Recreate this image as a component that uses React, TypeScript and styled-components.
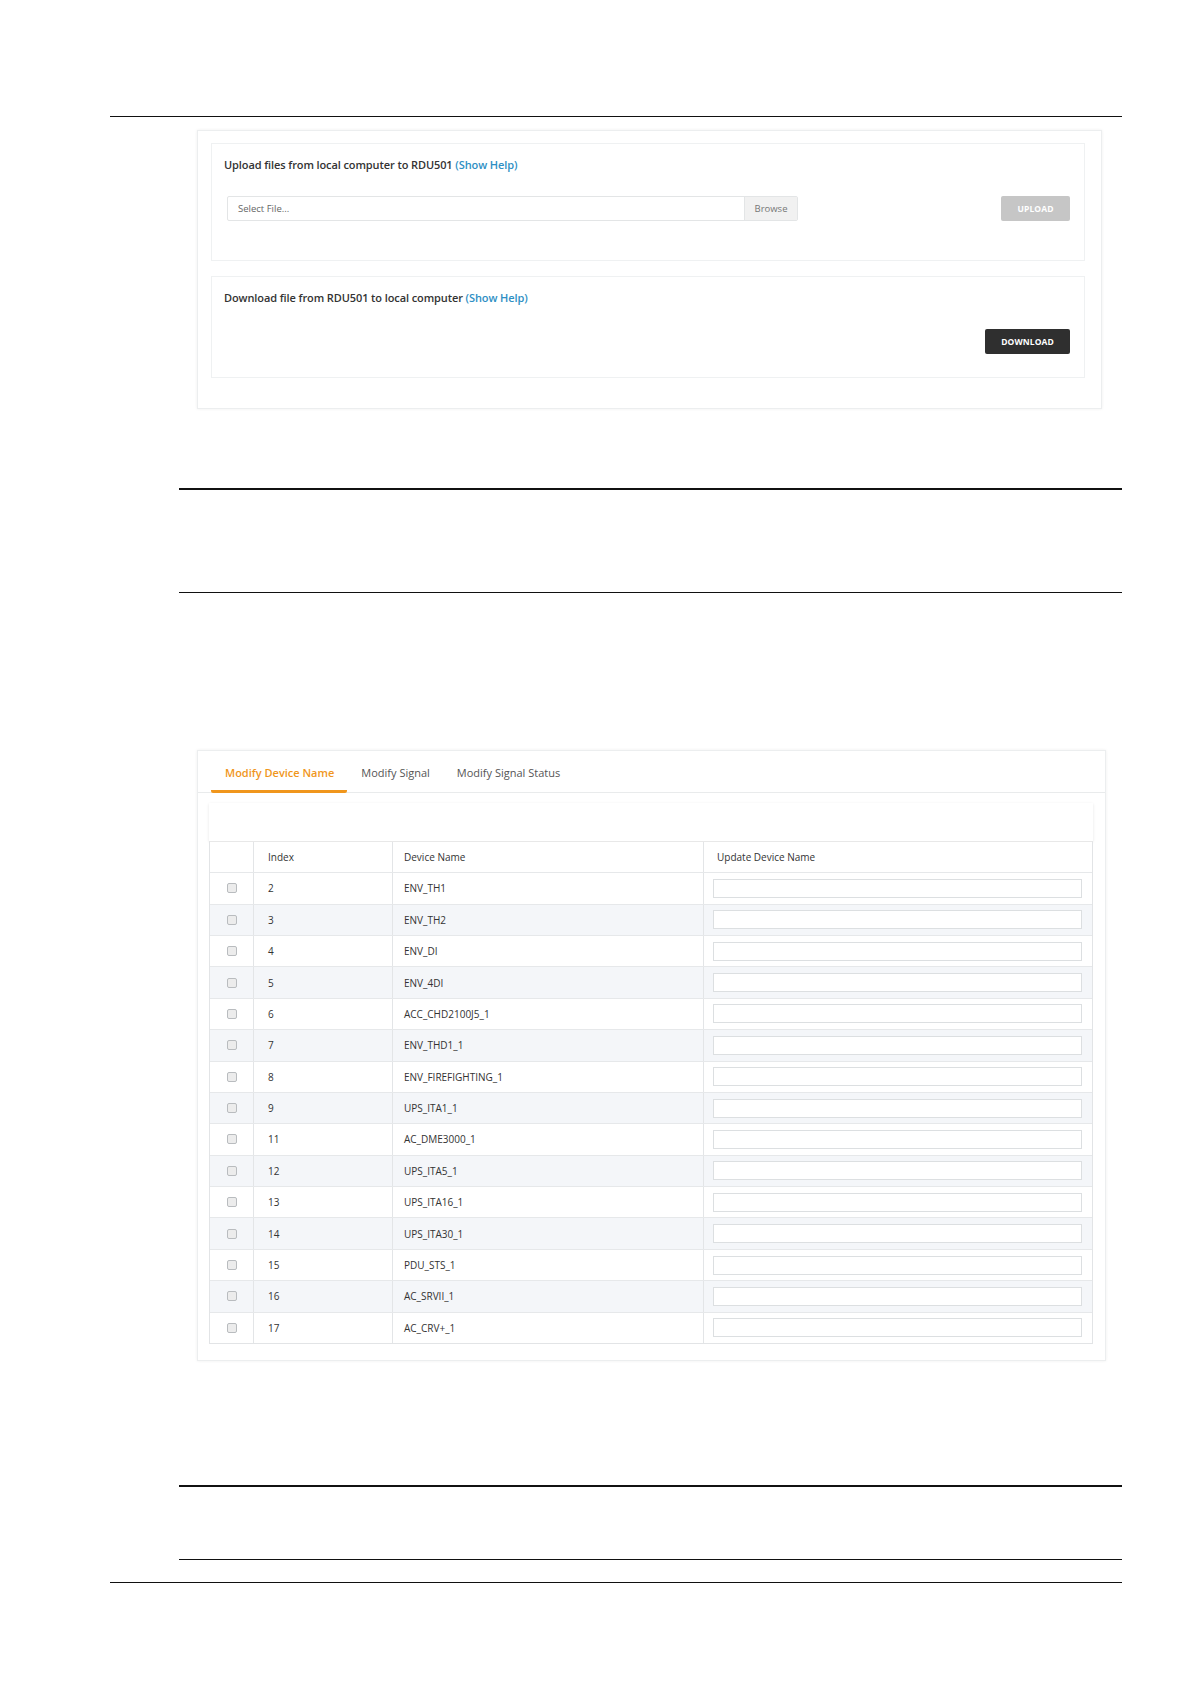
import styled, { createGlobalStyle } from 'styled-components';

const GlobalStyle = createGlobalStyle`
  body {
    margin: 0;
    background: #ffffff;
    font-family: 'Open Sans', 'Liberation Sans', sans-serif;
    color: #333333;
  }
`;

const Page = styled.div`
  width: 1190px;
  height: 1684px;
  display: flex;
  flex-direction: column;
  background: #ffffff;
`;

const Rule = styled.div<{ $top: number; $left: number }>`
  margin: ${(p) => p.$top}px 68px 0 ${(p) => p.$left}px;
  height: 1.4px;
  background: #111111;
  flex: none;
`;

const OuterCard = styled.div<{ $top: number; $width: number; $height: number }>`
  box-sizing: border-box;
  margin: ${(p) => p.$top}px 0 0 197px;
  width: ${(p) => p.$width}px;
  height: ${(p) => p.$height}px;
  background: #ffffff;
  border: 1px solid #eceeef;
  box-shadow: 0 0 3px rgba(0, 0, 0, 0.07);
  flex: none;
`;

const FileBody = styled.div`
  display: flex;
  flex-direction: column;
  gap: 15px;
  padding: 12px 16px 0 13px;
`;

const Section = styled.div<{ $height: number }>`
  box-sizing: border-box;
  height: ${(p) => p.$height}px;
  border: 1px solid #eff1f2;
  background: #ffffff;
  padding: 12px 14px 0 12px;
  display: flex;
  flex-direction: column;
`;

const Title = styled.div`
  font-size: 11px;
  font-weight: 600;
  line-height: 18px;
  color: #333333;
  letter-spacing: -0.1px;
`;

const Help = styled.span`
  color: #2e8fc4;
`;

const UploadRow = styled.div`
  display: flex;
  align-items: center;
  justify-content: space-between;
  margin: 22px 0 0 3px;
`;

const FileInput = styled.div`
  box-sizing: border-box;
  width: 571px;
  height: 25px;
  display: flex;
  border: 1px solid #e3e5e6;
  border-radius: 2px;
  font-size: 9.5px;
  color: #666666;
`;

const FilePlaceholder = styled.div`
  flex: 1;
  display: flex;
  align-items: center;
  padding-left: 10px;
`;

const BrowseBtn = styled.div`
  width: 52px;
  display: flex;
  align-items: center;
  justify-content: center;
  background: #f1f1f1;
  border-left: 1px solid #e3e5e6;
  color: #777777;
`;

const ActionButton = styled.div<{ $dark?: boolean; $width: number }>`
  box-sizing: border-box;
  width: ${(p) => p.$width}px;
  height: 25px;
  border-radius: 2px;
  display: flex;
  align-items: center;
  justify-content: center;
  font-size: 8.5px;
  font-weight: 700;
  letter-spacing: 0.1px;
  color: #ffffff;
  background: ${(p) => (p.$dark ? '#2f2f2f' : '#c6c6c6')};
`;

const DownloadRow = styled.div`
  display: flex;
  justify-content: flex-end;
  margin-top: 22px;
`;

const TabBar = styled.div`
  height: 41px;
  display: flex;
  padding-left: 13px;
  border-bottom: 1px solid #e9ebec;
`;

const Tab = styled.div<{ $active?: boolean }>`
  box-sizing: border-box;
  display: flex;
  align-items: center;
  padding: 3px 13px 0 14px;
  font-size: 11px;
  font-weight: ${(p) => (p.$active ? 600 : 400)};
  color: ${(p) => (p.$active ? '#f0961c' : '#555555')};
  border-bottom: 3px solid ${(p) => (p.$active ? '#f0961c' : 'transparent')};
  border-radius: 0 0 2px 2px;
  margin-bottom: -1px;
`;

const TabBody = styled.div`
  padding: 10px 12px 0 11px;
`;

const Toolbar = styled.div`
  height: 38px;
  background: #ffffff;
  box-shadow: 0 1px 3px rgba(0, 0, 0, 0.1);
`;

const Table = styled.div`
  box-sizing: border-box;
  width: 884px;
  border: 1px solid #e2e4e6;
  border-top: 1px solid #e8e8e8;
  font-size: 10px;
  color: #333333;
`;

const Row = styled.div<{ $striped?: boolean; $height: number }>`
  display: grid;
  grid-template-columns: 43px 139px 311px 1fr;
  height: ${(p) => p.$height}px;
  background: ${(p) => (p.$striped ? '#f4f6f9' : '#ffffff')};
  & + & {
    border-top: 1px solid #e6e8ea;
  }
`;

const Cell = styled.div<{ $pad?: number; $center?: boolean }>`
  display: flex;
  align-items: center;
  justify-content: ${(p) => (p.$center ? 'center' : 'flex-start')};
  padding-left: ${(p) => p.$pad ?? 0}px;
  & + & {
    border-left: 1px solid #e3e5e7;
  }
`;

const Check = styled.div`
  box-sizing: border-box;
  width: 10px;
  height: 10px;
  border: 1px solid #b9bcbf;
  border-radius: 2px;
  background: #ececec;
`;

const NameInput = styled.div`
  box-sizing: border-box;
  width: 369px;
  height: 19px;
  margin-left: 9px;
  border: 1px solid #dcdfe1;
  background: #ffffff;
`;

const rows: [string, string][] = [
  ['2', 'ENV_TH1'],
  ['3', 'ENV_TH2'],
  ['4', 'ENV_DI'],
  ['5', 'ENV_4DI'],
  ['6', 'ACC_CHD2100J5_1'],
  ['7', 'ENV_THD1_1'],
  ['8', 'ENV_FIREFIGHTING_1'],
  ['9', 'UPS_ITA1_1'],
  ['11', 'AC_DME3000_1'],
  ['12', 'UPS_ITA5_1'],
  ['13', 'UPS_ITA16_1'],
  ['14', 'UPS_ITA30_1'],
  ['15', 'PDU_STS_1'],
  ['16', 'AC_SRVII_1'],
  ['17', 'AC_CRV+_1'],
];

export default function App() {
  return (
    <Page>
      <GlobalStyle />
      <Rule $top={116} $left={110} />

      <OuterCard $top={13} $width={905} $height={279}>
        <FileBody>
          <Section $height={118}>
            <Title>
              Upload files from local computer to RDU501 <Help>(Show Help)</Help>
            </Title>
            <UploadRow>
              <FileInput>
                <FilePlaceholder>Select File...</FilePlaceholder>
                <BrowseBtn>Browse</BrowseBtn>
              </FileInput>
              <ActionButton $width={69}>UPLOAD</ActionButton>
            </UploadRow>
          </Section>
          <Section $height={102}>
            <Title>
              Download file from RDU501 to local computer <Help>(Show Help)</Help>
            </Title>
            <DownloadRow>
              <ActionButton $dark $width={85}>DOWNLOAD</ActionButton>
            </DownloadRow>
          </Section>
        </FileBody>
      </OuterCard>

      <Rule $top={79} $left={179} />
      <Rule $top={102} $left={179} />

      <OuterCard $top={157} $width={909} $height={611}>
        <TabBar>
          <Tab $active>Modify Device Name</Tab>
          <Tab>Modify Signal</Tab>
          <Tab>Modify Signal Status</Tab>
        </TabBar>
        <TabBody>
          <Toolbar />
          <Table>
            <Row $height={30}>
              <Cell />
              <Cell $pad={14}>Index</Cell>
              <Cell $pad={11}>Device Name</Cell>
              <Cell $pad={13}>Update Device Name</Cell>
            </Row>
            {rows.map(([idx, name], i) => (
              <Row key={idx} $height={30.4} $striped={i % 2 === 1}>
                <Cell $center>
                  <Check />
                </Cell>
                <Cell $pad={14}>{idx}</Cell>
                <Cell $pad={11}>{name}</Cell>
                <Cell>
                  <NameInput />
                </Cell>
              </Row>
            ))}
          </Table>
        </TabBody>
      </OuterCard>

      <Rule $top={124} $left={179} />
      <Rule $top={72} $left={179} />
      <Rule $top={22} $left={110} />
    </Page>
  );
}
